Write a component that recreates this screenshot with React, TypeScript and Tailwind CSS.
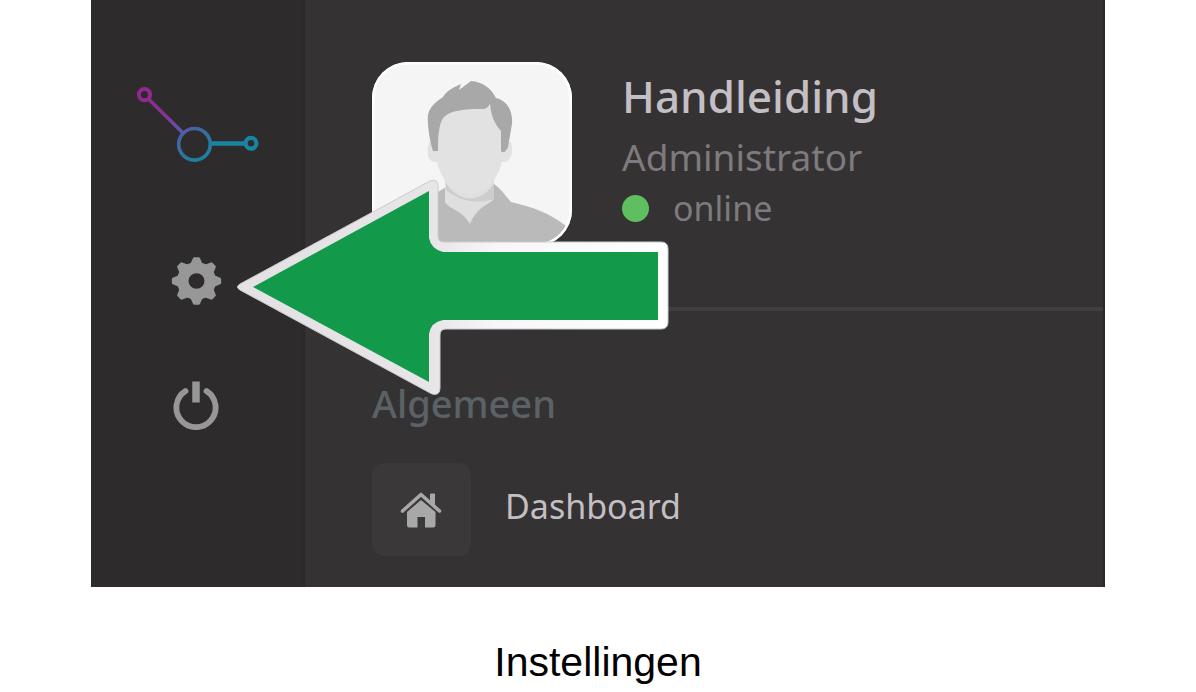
function BrandLogo() {
  return (
    <svg className="h-[80px] w-[128px]" viewBox="134 84 128 80" fill="none" aria-hidden="true">
      <defs>
        <linearGradient id="link" gradientUnits="userSpaceOnUse" x1="148" y1="98" x2="183" y2="133">
          <stop offset="0" stopColor="#91298f" />
          <stop offset="0.5" stopColor="#853494" />
          <stop offset="1" stopColor="#5b5bb0" />
        </linearGradient>
        <linearGradient id="hub" gradientUnits="userSpaceOnUse" x1="184" y1="128" x2="202" y2="160">
          <stop offset="0" stopColor="#5259a8" />
          <stop offset="0.5" stopColor="#3470a0" />
          <stop offset="1" stopColor="#1b83a2" />
        </linearGradient>
      </defs>
      <path d="M148 98.500L182.500 132.500" stroke="url(#link)" strokeWidth="3.600" />
      <circle cx="144.500" cy="94.700" r="5.600" stroke="#91298f" strokeWidth="4" />
      <path d="M211 143.500H246" stroke="#1a85a3" strokeWidth="4.600" />
      <circle cx="194.500" cy="144.300" r="15.800" stroke="url(#hub)" strokeWidth="3.600" />
      <circle cx="251" cy="143.300" r="5.400" stroke="#1a85a3" strokeWidth="4.200" />
    </svg>
  );
}

const teeth = [0, 45, 90, 135, 180, 225, 270, 315];

function GearIcon() {
  return (
    <svg className="h-[50px] w-[52px]" viewBox="-25.500 -25 52 50" aria-hidden="true">
      <g transform="scale(1.040 1)">
        <circle r="13.200" fill="none" stroke="#989798" strokeWidth="11" />
        {teeth.map((angle) => (
          <path
            key={angle}
            d="M-4.500 -16.500L-2 -22.200H2L4.500 -16.500Z"
            fill="#989798"
            stroke="#989798"
            strokeWidth="3"
            strokeLinejoin="round"
            transform={`rotate(${angle})`}
          />
        ))}
      </g>
    </svg>
  );
}

function PowerIcon() {
  return (
    <svg className="h-[50px] w-[52px]" viewBox="171 381 52 50" fill="none" stroke="#989798" aria-hidden="true">
      <path d="M185.500 392A19.600 19.600 0 1 0 206.500 392" strokeWidth="5.800" strokeLinecap="round" />
      <path d="M196 382.500V403.500" strokeWidth="7.500" />
    </svg>
  );
}

function HomeIcon() {
  return (
    <svg className="h-[40px] w-[44px]" viewBox="400 490 44 40" aria-hidden="true">
      <path d="M402.500 511L421 494.500L439.500 511" fill="none" stroke="#a9a8a9" strokeWidth="3.600" strokeLinecap="round" strokeLinejoin="round" />
      <path d="M430.500 494H434.500V505L430.500 501Z" fill="#a9a8a9" stroke="#a9a8a9" strokeLinejoin="round" />
      <path d="M407 512L421 500L435.500 512V525Q435.500 527.500 433 527.500H425V517H417.500V527.500H409Q407 527.500 407 525Z" fill="#a9a8a9" />
    </svg>
  );
}

function Avatar() {
  return (
    <svg className="h-[184px] w-[200px] shrink-0" viewBox="372 62 200 184" role="img" aria-label="Handleiding">
      <defs>
        <clipPath id="frame">
          <rect x="372" y="62" width="200" height="184" rx="36" />
        </clipPath>
      </defs>
      <g clipPath="url(#frame)">
        <rect x="372" y="62" width="200" height="184" fill="#f5f5f5" />
        <path d="M420 204L438 192L446 187L494 184C500 188 505 195 511 202C532 207 550 213 566 226L566 248H410Z" fill="#bababa" />
        <path d="M445 178H494V199C487 206 477 207 470 224C461 209 450 210 445 202Z" fill="#dfdfdf" />
        <path d="M446 183C460 205 483 202 494 183V199C475 205 458 200 446 190Z" fill="#cecccd" />
        <path d="M429 142C426 153 428 163 436 162H505C512 161 513 151 511 142Z" fill="#e2e2e2" />
        <path d="M438 120C442 103 458 100 490 106L503 130V158C500 172 491 194 470 194C449 194 439 174 436 158Z" fill="#e2e2e2" />
        <path d="M433 151C430 142 427 125 428 115C430 105 438 101 443 97C448 89 455 87 461 84L459 90L471 81C483 82 491 88 496 98C508 101 513 112 512 124L508 147Q504 155 501 151V131C494 123 491 115 490 104Q487 110 481 109C465 109 451 110 444 117C439 123 438 134 438 151Z" fill="#a8a8a8" />
        <rect x="373" y="63" width="198" height="182" rx="35" fill="none" stroke="#fff" strokeWidth="3" />
      </g>
    </svg>
  );
}

function PointerArrow() {
  return (
    <svg className="pointer-events-none absolute top-[174px] left-[140px] h-[228px] w-[444px]" viewBox="231 174 444 228" aria-hidden="true">
      <defs>
        <linearGradient id="edge" gradientUnits="userSpaceOnUse" x1="238" y1="0" x2="668" y2="0">
          <stop offset="0" stopColor="#e3e1e3" />
          <stop offset="0.45" stopColor="#e8e5e8" />
          <stop offset="0.6" stopColor="#f8f6f8" />
          <stop offset="1" stopColor="#fff" />
        </linearGradient>
      </defs>
      <path
        d="M240 284L430 181Q438 178 438 186V236Q438 242 444 242H661Q668 242 668 249V322Q668 329 661 329H446Q440 329 440 335V388Q440 396 432 394L240 290Q235 287 240 284Z"
        fill="url(#edge)"
        stroke="#c9cccf"
        strokeWidth="1"
      />
      <path d="M253 287L429 191V238Q431 249 443 252H658V320H443Q431 322 429 334V382Z" fill="#129a4a" />
    </svg>
  );
}

export default function App() {
  return (
    <figure className="bg-white px-[91px] font-['Noto_Sans','Open_Sans',sans-serif]">
      <div className="relative flex bg-[#353233]">
        <aside className="flex w-[214px] shrink-0 flex-col items-center border-r-2 border-[#2a2829] bg-[#2d2b2c] pt-[84px]">
          <a href="#" aria-label="Home" className="ml-[2px]">
            <BrandLogo />
          </a>
          <button type="button" aria-label="Instellingen" className="mt-[92px]">
            <GearIcon />
          </button>
          <button type="button" aria-label="Uitloggen" className="mt-[74px]">
            <PowerIcon />
          </button>
        </aside>

        <main className="min-w-0 grow border-r-2 border-[#2a2829] pt-[62px] pb-[31px] pl-[67px]">
          <section className="flex gap-[50px] border-b-4 border-[#413f40] pb-[61px]">
            <Avatar />
            <div className="pt-1">
              <h1 className="text-[44px] leading-[60px] font-medium text-[#c3bfc3]">Handleiding</h1>
              <p className="text-[37px] leading-[62px] text-[#7d7b7d]">Administrator</p>
              <p className="flex items-center gap-6 text-[34px] leading-[40px] text-[#7d7b7d]">
                <span className="size-[27px] rounded-full bg-[#5fbf60]" />
                online
              </p>
            </div>
          </section>

          <nav aria-labelledby="general" className="pt-[68px]">
            <h2 id="general" className="text-[38px] leading-[48px] font-medium text-[#5b6266]">Algemeen</h2>
            <a href="#" className="mt-9 flex gap-[34px] text-[34px] leading-[86px] text-[#c3bfc3]">
              <span className="flex h-[93px] w-[99px] items-center justify-center rounded-xl bg-[#3a3839]">
                <HomeIcon />
              </span>
              Dashboard
            </a>
          </nav>
        </main>
        <PointerArrow />
      </div>
      <figcaption className="pt-[51px] text-center font-['Liberation_Sans',sans-serif] text-[41px] leading-[48px] text-black">
        Instellingen
      </figcaption>
    </figure>
  );
}
